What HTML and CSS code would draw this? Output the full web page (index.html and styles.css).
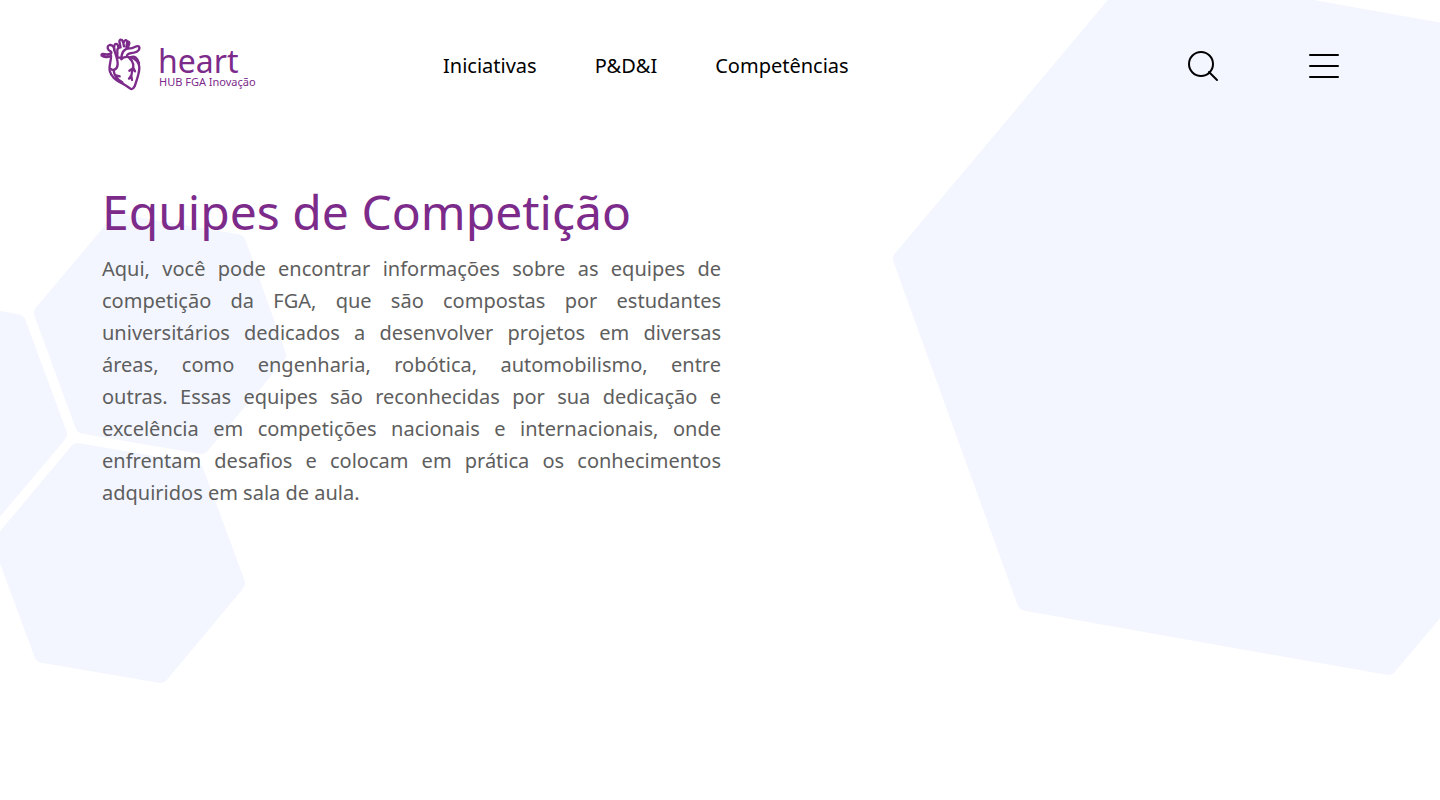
FILE: index.html
```html
<!DOCTYPE html>
<html lang="pt-BR">
<head>
<meta charset="utf-8">
<meta name="viewport" content="width=device-width, initial-scale=1">
<title>Equipes de Competição</title>
<link rel="stylesheet" href="styles.css">
</head>
<body>
<div class="page">
  <svg class="hexes hexes-left" width="300" height="700" viewBox="0 0 300 700" aria-hidden="true">
    <polygon points="58,434 -18,524 -136,504 -176,393 -99,303 17,323"/>
    <polygon points="277,355 201,445 84,425 43,313 119,223 237,243"/>
    <polygon points="236,583 160,674 43,654 2,543 78,452 195,472"/>
  </svg>
  <svg class="hexes hexes-right" width="560" height="700" viewBox="0 0 560 700" aria-hidden="true">
    <polygon points="744,386 508,666 146,602 22,259 258,-22 619,42"/>
  </svg>

  <header class="header">
    <a class="logo" href="#">
      <svg class="logo-mark" width="42" height="52" viewBox="18 30 126 156" aria-hidden="true">
        <path d="M48 70C41 74 32 74 24 72Q18 73 20 77Q26 82 36 81L46 79"/>
        <path d="M48 71C52 64 45 64 41 60C36 54 37 47 44 45C53 44 57 51 58 60C61 72 69 89 68 103C67 118 55 124 46 116M48 77C50 91 41 104 44 122C49 143 70 155 83 161C93 166 101 173 108 177Q114 179 119 169C123 155 133 132 133 113C132 97 121 86 107 82"/>
        <path d="M58 60C57 51 58 44 61 42C66 40 70 45 70 53M67 82V60Q68 52 77 52"/>
        <path d="M76 49L73 34Q74 27 81 30Q86 37 87 49M87 36Q92 26 97 34L94 51M97 37Q103 32 103 40L99 52"/>
        <path d="M68 83H78M79 88C79 67 87 55 105 55C117 55 124 45 131 49C137 56 130 66 117 68C106 69 96 70 95 80M79 88Q87 77 107 82C119 75 128 86 132 99"/>
        <path d="M103 84C118 97 117 112 111 126Q107 138 111 150M112 116L103 122M114 112L120 124M109 136L102 146"/>
        <path d="M56 121C57 138 66 148 82 157M60 135L74 139"/>
      </svg>
      <span class="logo-text">
        <span class="logo-name">heart</span>
        <span class="logo-sub">HUB FGA Inovação</span>
      </span>
    </a>
    <nav class="nav">
      <a href="#">Iniciativas</a>
      <a href="#">P&amp;D&amp;I</a>
      <a href="#">Competências</a>
    </nav>
    <div class="actions">
      <button class="icon-button" type="button" aria-label="Buscar">
        <svg width="32" height="32" viewBox="0 0 32 32"><circle cx="14" cy="14" r="12"/><path d="M22 22L30 30"/></svg>
      </button>
      <button class="icon-button" type="button" aria-label="Menu">
        <svg width="32" height="32" viewBox="0 0 32 32"><path d="M2 5H30M2 16H30M2 27H30"/></svg>
      </button>
    </div>
  </header>

  <main class="intro">
    <h1 class="title">Equipes de Competição</h1>
    <p class="lead">Aqui, você pode encontrar informações sobre as equipes de competição da FGA, que são compostas por estudantes universitários dedicados a desenvolver projetos em diversas áreas, como engenharia, robótica, automobilismo, entre<br>
      outras. Essas equipes são reconhecidas por sua dedicação e<br>
      excelência em competições nacionais e internacionais, onde<br>
      enfrentam desafios e colocam em prática os conhecimentos
      <span class="lead-end">adquiridos em sala de aula.</span></p>
  </main>
</div>
</body>
</html>
```
FILE: styles.css
```css
* {
  box-sizing: border-box;
}

body {
  margin: 0;
  background: #fff;
  color: #000;
  font-family: "Noto Sans", "Open Sans", sans-serif;
}

.page {
  position: relative;
  min-height: 100vh;
  overflow: hidden;
}

.hexes {
  position: absolute;
  top: 0;
  z-index: -1;
  fill: #f3f6fe;
  stroke: #f3f6fe;
  stroke-width: 18;
  stroke-linejoin: round;
}

.hexes-left {
  left: 0;
}

.hexes-right {
  right: 0;
}

.header {
  display: flex;
  align-items: center;
  height: 132px;
  padding: 0 100px 0 101px;
}

.logo {
  display: flex;
  align-items: center;
  gap: 15px;
  width: 342px;
  color: #7d2b8b;
  text-decoration: none;
}

.logo-mark {
  overflow: visible;
  fill: none;
  stroke: #7d2b8b;
  stroke-width: 7;
  stroke-linecap: round;
  stroke-linejoin: round;
}

.logo-text {
  display: flex;
  flex-direction: column;
  padding-top: 4px;
}

.logo-name {
  font-size: 32px;
  line-height: 28px;
}

.logo-sub {
  padding-left: 1px;
  font-size: 11px;
  line-height: 14px;
}

.nav {
  display: flex;
  gap: 58px;
  font-size: 20px;
  line-height: 28px;
}

.nav a {
  color: #000;
  text-decoration: none;
}

.actions {
  display: flex;
  gap: 89px;
  margin-left: auto;
}

.icon-button {
  display: flex;
  padding: 0;
  border: 0;
  background: none;
  cursor: pointer;
}

.icon-button svg {
  fill: none;
  stroke: #000;
  stroke-width: 2;
  stroke-linecap: round;
}

.intro {
  max-width: 721px;
  padding: 48px 0 0 102px;
}

.title {
  margin: 0;
  color: #7d2b8b;
  font-size: 48px;
  font-weight: 400;
  line-height: 64px;
}

.lead {
  margin: 9px 0 0;
  color: #5e5e5e;
  font-size: 20px;
  line-height: 32px;
  text-align: justify;
  text-align-last: justify;
}

.lead-end {
  display: block;
  text-align-last: left;
}
```
